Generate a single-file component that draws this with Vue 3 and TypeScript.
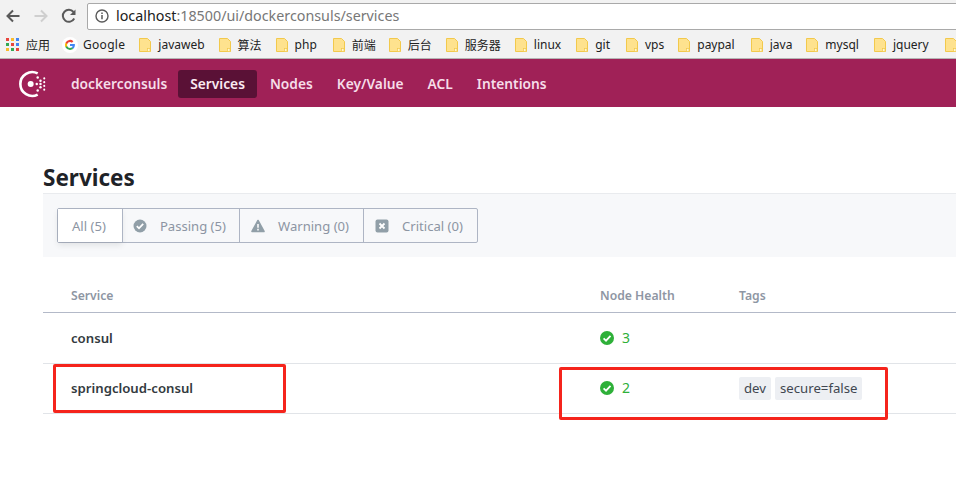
<script setup lang="ts">
interface Bookmark {
  label: string
  gap: number
}

const bookmarks: Bookmark[] = [
  { label: 'javaweb', gap: 14 },
  { label: '算法', gap: 14 },
  { label: 'php', gap: 16 },
  { label: '前端', gap: 13 },
  { label: '后台', gap: 14 },
  { label: '服务器', gap: 14 },
  { label: 'linux', gap: 15 },
  { label: 'git', gap: 16 },
  { label: 'vps', gap: 14 },
  { label: 'paypal', gap: 16 },
  { label: 'java', gap: 14 },
  { label: 'mysql', gap: 15 },
  { label: 'jquery', gap: 16 },
  { label: '', gap: 0 }
]

const navItems = ['Services', 'Nodes', 'Key/Value', 'ACL', 'Intentions']
const appsColors = ['#e8453c', '#f9bb2d', '#4285f4', '#34a853', '#e8453c', '#4285f4', '#f9bb2d', '#34a853', '#e8453c']
</script>

<template>
  <div class="page">
    <div class="toolbar">
      <svg class="tool-icon first" viewBox="0 0 16 16"><path d="M14.500 8H3M8 2.500 2.500 8 8 13.500" fill="none" stroke="#5a5a5a" stroke-width="2" /></svg>
      <svg class="tool-icon" viewBox="0 0 16 16"><path d="M1.500 8H13M8 2.500 13.500 8 8 13.500" fill="none" stroke="#cfcfcf" stroke-width="2" /></svg>
      <svg class="tool-icon last" viewBox="0 0 16 16"><path d="M13.200 10.500A6 6 0 1 1 12.500 4" fill="none" stroke="#5a5a5a" stroke-width="2" /><path d="M14.500 1.500v5.500H9z" fill="#5a5a5a" /></svg>
      <div class="address">
        <svg class="info" viewBox="0 0 14 14"><circle cx="7" cy="7" r="6" fill="none" stroke="#5a5a5a" stroke-width="1.400" /><path d="M7 6v4.200M7 3.500v1.400" stroke="#5a5a5a" stroke-width="1.500" /></svg>
        <span class="host">localhost</span><span class="path">:18500/ui/dockerconsuls/services</span>
      </div>
    </div>

    <div class="bookmarks">
      <span class="apps"><i v-for="(c, i) in appsColors" :key="i" :style="{ background: c }"></i></span>
      <span class="bm-text apps-label">应用</span>
      <svg class="google" viewBox="0 0 16 16">
        <circle cx="8" cy="8" r="8" fill="#fff" />
        <path d="M12.800 6.900H8v2.100h2.700a2.900 2.900 0 0 1-1.100 1.500l1.700 1.300c1-.9 1.600-2.300 1.600-3.800 0-.4 0-.8-.1-1.100z" fill="#4285f4" />
        <path d="M8 13c1.400 0 2.500-.5 3.300-1.200l-1.700-1.300c-.4.300-1 .5-1.600.5-1.300 0-2.400-.9-2.800-2H3.500v1.300A5 5 0 0 0 8 13z" fill="#34a853" />
        <path d="M5.200 9a3 3 0 0 1 0-2V5.700H3.500a5 5 0 0 0 0 4.600z" fill="#fbbc05" />
        <path d="M8 5c.7 0 1.400.3 1.900.7l1.500-1.500A5 5 0 0 0 3.500 5.700L5.200 7c.4-1.200 1.500-2 2.800-2z" fill="#ea4335" />
      </svg>
      <span class="bm-text google-label">Google</span>
      <span v-for="b in bookmarks" :key="b.label" class="bookmark" :style="{ marginRight: b.gap + 'px' }">
        <svg class="folder" viewBox="0 0 12 14"><path d="M.5.500h8l3 3v10H.5z" fill="#fee28e" stroke="#f2c94c" /><rect x="8.500" y="10.500" width="2.500" height="3" fill="#fff6d0" stroke="#f2c94c" stroke-width=".7" /></svg>
        <span v-if="b.label" class="bm-text">{{ b.label }}</span>
      </span>
    </div>

    <header class="topnav">
      <svg class="logo" viewBox="0 0 32 32">
        <path d="M21 27.300A12.700 12.700 0 1 1 21 4.700" fill="none" stroke="#fff" stroke-width="2.800" />
        <circle cx="13.500" cy="16" r="3.200" fill="#fff" />
        <g fill="#fff">
          <circle cx="20" cy="16" r="1.300" /><circle cx="24" cy="12.500" r="1.300" /><circle cx="24" cy="19.500" r="1.300" />
          <circle cx="24" cy="16" r="1.300" /><circle cx="28" cy="10" r="1.100" /><circle cx="28" cy="14" r="1.100" />
          <circle cx="28" cy="18" r="1.100" /><circle cx="28" cy="22" r="1.100" /><circle cx="21" cy="9" r="1.300" /><circle cx="21" cy="23" r="1.300" />
        </g>
      </svg>
      <span class="dc">dockerconsuls</span>
      <a v-for="item in navItems" :key="item" class="nav-item" :class="{ active: item === 'Services' }">{{ item }}</a>
    </header>

    <main class="content">
      <h1>Services</h1>
      <div class="filter-bar">
        <div class="filters">
          <div class="filter selected">All (5)</div>
          <div class="filter passing">
            <svg viewBox="0 0 14 14"><circle cx="7" cy="7" r="6.500" fill="#919fa8" /><path d="M3.800 7.200 6 9.300l4.200-4.400" fill="none" stroke="#fff" stroke-width="1.800" /></svg>
            Passing (5)
          </div>
          <div class="filter">
            <svg viewBox="0 0 14 14"><path d="M7 1.500 13 12.500H1z" fill="#919fa8" stroke="#919fa8" stroke-width="1.600" stroke-linejoin="round" /><path d="M7 5v3.800M7 9.800v1.600" stroke="#fff" stroke-width="1.500" /></svg>
            Warning (0)
          </div>
          <div class="filter">
            <svg viewBox="0 0 14 14"><rect x=".5" y=".5" width="13" height="13" rx="2" fill="#919fa8" /><path d="m4.500 4.500 5 5m0-5-5 5" stroke="#fff" stroke-width="1.800" /></svg>
            Critical (0)
          </div>
        </div>
      </div>

      <div class="table">
        <div class="row head">
          <div class="col-service">Service</div>
          <div class="col-health">Node Health</div>
          <div>Tags</div>
        </div>
        <div class="row first">
          <div class="col-service name">consul</div>
          <div class="col-health health">
            <svg viewBox="0 0 14 14"><circle cx="7" cy="7" r="7" fill="#2eb039" /><path d="M3.600 7.300 6 9.600l4.500-4.800" fill="none" stroke="#fff" stroke-width="1.800" /></svg>
            3
          </div>
          <div></div>
        </div>
        <div class="row second">
          <div class="col-service name">springcloud-consul</div>
          <div class="col-health health">
            <svg viewBox="0 0 14 14"><circle cx="7" cy="7" r="7" fill="#2eb039" /><path d="M3.600 7.300 6 9.600l4.500-4.800" fill="none" stroke="#fff" stroke-width="1.800" /></svg>
            2
          </div>
          <div class="tags"><span class="tag">dev</span><span class="tag">secure=false</span></div>
        </div>
      </div>
    </main>

    <div class="mark mark-name"></div>
    <div class="mark mark-tags"></div>
  </div>
</template>

<style>
html,
body {
  margin: 0;
  background: #fff;
  overflow: hidden;
}
</style>

<style scoped>
.page {
  position: relative;
  width: 956px;
  height: 495px;
  overflow: hidden;
  font-family: "Noto Sans", "Open Sans", "Noto Sans CJK SC", sans-serif;
}

.toolbar {
  height: 30px;
  padding-top: 2px;
  background: #f2f2f2;
  display: flex;
  align-items: center;
  box-sizing: border-box;
}

.tool-icon {
  width: 16px;
  height: 16px;
  margin-right: 12px;
  flex: none;
}

.tool-icon.first {
  margin-left: 5px;
}

.tool-icon.last {
  margin-right: 10px;
}

.address {
  flex: 1;
  height: 27px;
  margin-right: -10px;
  background: #fff;
  border: 1px solid #a9a9a9;
  border-radius: 2px;
  display: flex;
  align-items: center;
  box-sizing: border-box;
  padding-left: 7px;
  padding-bottom: 1px;
  font-size: 14.300px;
  white-space: pre;
}

.info {
  width: 14px;
  height: 14px;
  margin-right: 7px;
  flex: none;
}

.host {
  color: #202020;
}

.path {
  color: #777;
}

.bookmarks {
  height: 29px;
  padding-top: 1px;
  background: #f2f2f2;
  border-bottom: 1px solid #b5b5b5;
  box-sizing: border-box;
  display: flex;
  align-items: center;
  white-space: nowrap;
}

.apps {
  display: grid;
  grid-template-columns: repeat(3, 3px);
  gap: 2px;
  margin-left: 6px;
  margin-right: 7px;
  flex: none;
}

.apps i {
  width: 3px;
  height: 3px;
}

.bm-text {
  font-size: 12px;
  color: #222;
  flex: none;
}

.apps-label {
  margin-right: 13px;
}

.google {
  width: 16px;
  height: 16px;
  margin-left: -1px;
  margin-right: 5px;
  flex: none;
}

.google-label {
  margin-right: 14px;
  letter-spacing: 0.3px;
}

.bookmark {
  display: inline-flex;
  align-items: center;
  gap: 7px;
  flex: none;
}

.folder {
  width: 12px;
  height: 14px;
  flex: none;
}

.topnav {
  height: 48px;
  padding-top: 1px;
  box-sizing: border-box;
  background: #a02157;
  display: flex;
  align-items: center;
  padding-left: 18px;
  font-size: 13.750px;
  font-weight: 600;
  color: #f6dde9;
}

.logo {
  width: 30px;
  height: 30px;
  margin-right: 23px;
  flex: none;
}

.dc {
  margin-right: 11px;
}

.nav-item {
  padding: 4px 12px 5px;
  border-radius: 3px;
}

.nav-item.active {
  background: #5a1136;
  color: #fbeaf2;
  margin-right: 1px;
}

.content {
  padding-left: 43px;
}

h1 {
  margin: 55px 0 0;
  font-size: 22.500px;
  line-height: 31px;
  font-weight: 700;
  color: #1f2328;
}

.filter-bar {
  height: 64px;
  box-sizing: border-box;
  background: #f7f8fa;
  border-top: 1px solid #e9ebee;
  padding: 14px 14px;
}

.filters {
  display: inline-flex;
  height: 35px;
  box-sizing: border-box;
  background: #f7f8fa;
  border: 1px solid #aeb5c4;
  border-radius: 2px;
  font-size: 13.100px;
  color: #8c95a3;
}

.filter {
  display: flex;
  align-items: center;
  gap: 13px;
  padding: 0 14px 0 11px;
  border-left: 1px solid #aeb5c4;
}

.filter.passing {
  padding: 0 13px 0 10px;
}

.filter svg {
  width: 14px;
  height: 14px;
  flex: none;
}

.filter.selected {
  border-left: 0;
  background: #fff;
  padding: 0 16px 0 14px;
  box-shadow: 0 3px 6px rgba(31, 35, 40, 0.1);
}

.table {
  margin-top: 25px;
  font-size: 13.500px;
}

.row {
  display: grid;
  grid-template-columns: 557px 139px 1fr;
  height: 50px;
  box-sizing: border-box;
  align-items: center;
  border-bottom: 1px solid #e1e4e8;
}

.row.first {
  height: 51px;
}

.row.second {
  padding-bottom: 1px;
}

.row.head {
  height: 31px;
  align-items: start;
  border-bottom-color: #b3b9c8;
  font-size: 12.200px;
  font-weight: 600;
  color: #8e96a3;
  line-height: 28px;
}

.col-service {
  padding-left: 28px;
}

.name {
  font-size: 13.200px;
  font-weight: 600;
  color: #333a40;
}

.health {
  display: flex;
  align-items: center;
  gap: 8px;
  font-size: 14px;
  color: #2eb039;
  margin-top: -1px;
}

.health svg {
  width: 14px;
  height: 14px;
  flex: none;
}

.tags {
  display: flex;
  gap: 4px;
}

.tag {
  background: #edeff3;
  color: #404650;
  font-size: 13.200px;
  line-height: 23px;
  padding: 0 5px;
  border-radius: 2px;
}

.mark {
  position: absolute;
  box-sizing: border-box;
  border: 3px solid #f5241c;
  border-radius: 2px;
}

.mark-name {
  left: 53px;
  top: 364px;
  width: 233px;
  height: 49px;
}

.mark-tags {
  left: 559px;
  top: 367px;
  width: 329px;
  height: 53px;
}
</style>
